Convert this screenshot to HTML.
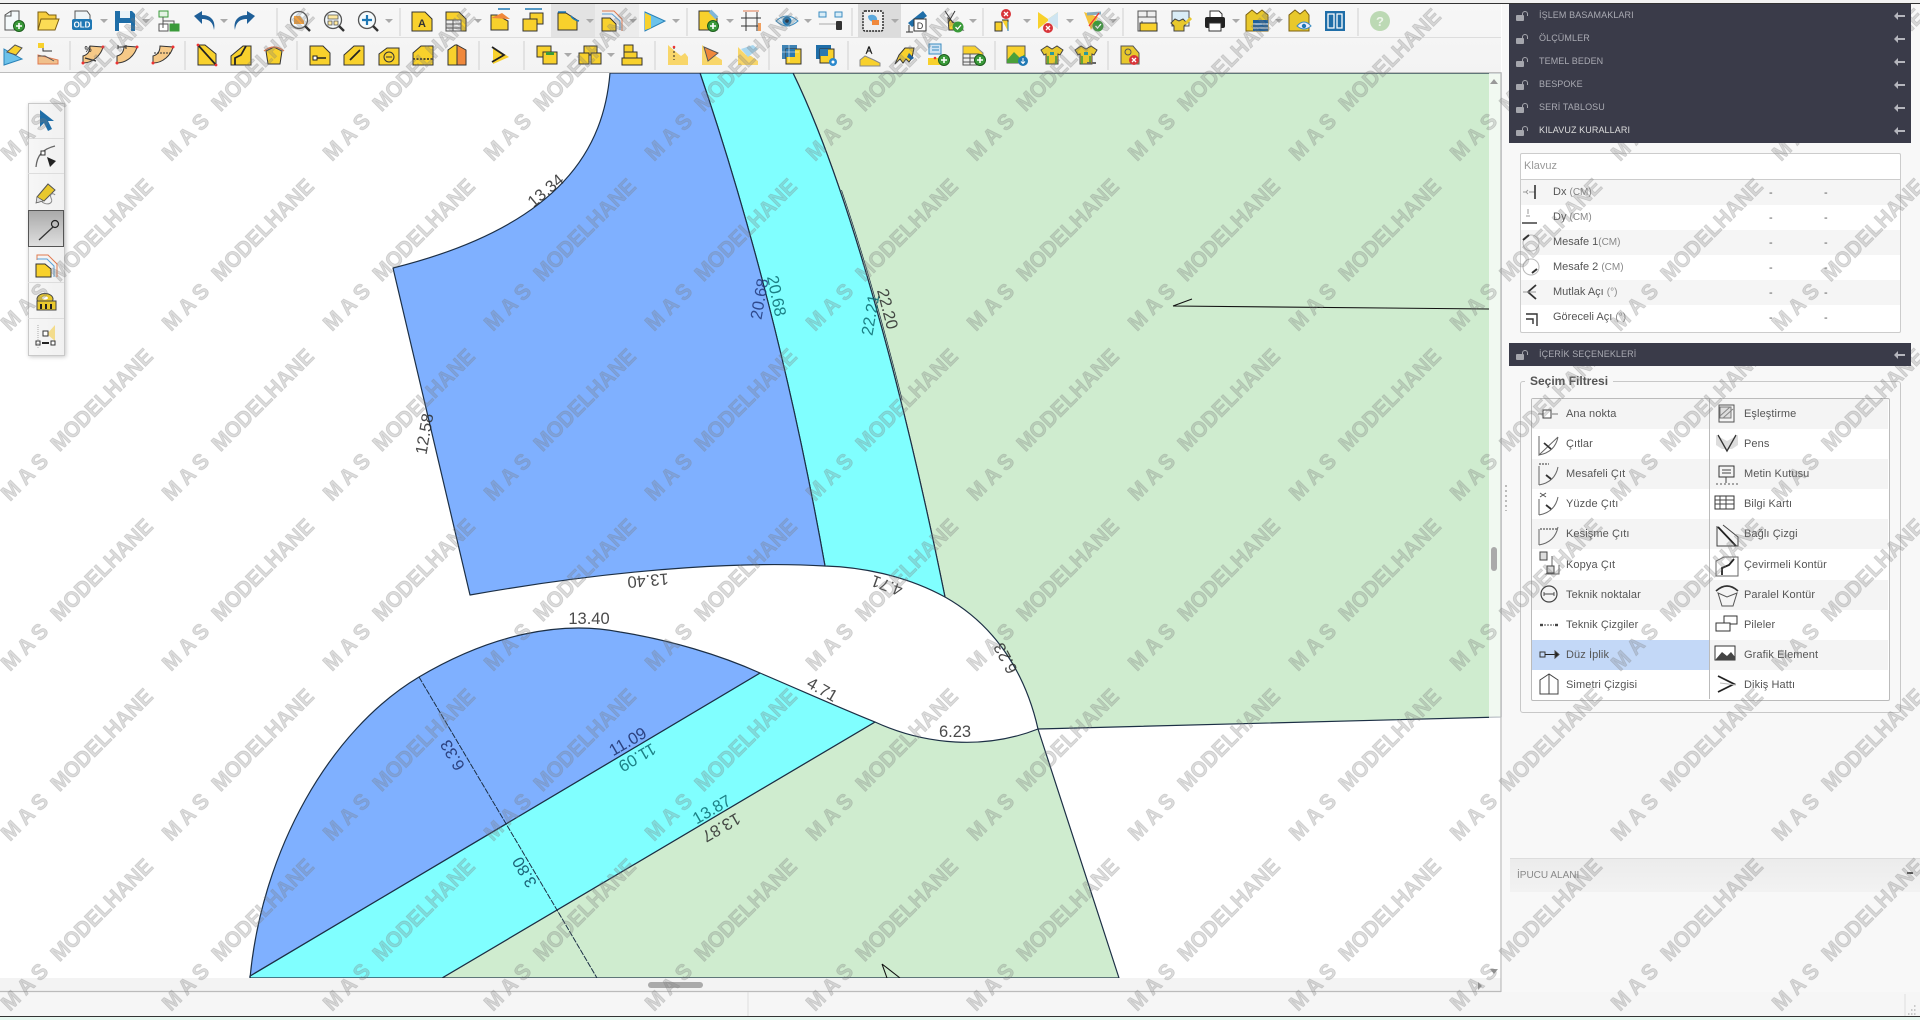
<!DOCTYPE html>
<html lang="tr"><head><meta charset="utf-8"><title>MAS Modelhane</title>
<style>
html,body{margin:0;padding:0;width:1920px;height:1020px;overflow:hidden;background:#fff;font-family:"Liberation Sans",sans-serif}
.a{position:absolute}
#tb{left:0;top:4px;width:1501px;height:68px;background:linear-gradient(#f7f7f7,#f3f3f3)}
#panel{left:1502px;top:4px;width:418px;height:988px;background:#f8f8f8}
.h{position:absolute;z-index:5;left:1509px;width:402px;height:23px;background:#3a3b49;color:#a9aab2;font-size:9px;line-height:23px;text-indent:30px;letter-spacing:.1px}
.h b{position:absolute;left:7px;top:11px;width:8px;height:6px;background:#a5a6ad;border-radius:1px}
.h b:after{content:"";position:absolute;left:6px;top:-4px;width:6px;height:5px;border:1.5px solid #a5a6ad;border-bottom:0;border-radius:4px 4px 0 0;box-sizing:border-box}
.h i{position:absolute;right:6px;top:11px;width:8px;height:2px;background:#b5b6bd}
.h i:before{content:"";position:absolute;left:-3px;top:-3px;border:4px solid transparent;border-left:0;border-right:4px solid #b5b6bd}
.box{left:1520px;top:153px;width:379px;height:178px;border:1px solid #ccc;border-radius:2px;background:#fff;color:#555;font-size:11px}
.r{position:absolute;left:0;width:379px;height:25px;line-height:25px}
.r.g{background:#f5f5f5}
.r span{position:absolute;left:32px}.r em{font-style:normal;color:#888;font-size:10px}
.r u{position:absolute;text-decoration:none;top:1px}
.c{position:absolute;height:30px;line-height:30px;font-size:11px;color:#555;letter-spacing:.1px}
.bg{background:#f4f4f4}
</style></head><body>

<div class="a" style="left:0;top:0;width:1920px;height:3px;background:#f2f2f2"></div>
<div class="a" style="left:0;top:3px;width:1920px;height:1px;background:#333"></div>

<!-- canvas -->
<svg class="a" style="left:0;top:0" width="1920" height="1020" viewBox="0 0 1920 1020" font-family="Liberation Sans" font-size="16.5" text-anchor="middle" dominant-baseline="central">
<defs><clipPath id="dbl"><rect x="800" y="190" width="200" height="210"/></clipPath></defs>
<rect x="0" y="72" width="1501" height="906" fill="#fff"/>
<g stroke="#1c2f45" stroke-width="1.2" stroke-linejoin="round">
<path fill="#cfeccf" d="M793 73L1501 73L1501 717L1038 729C1027 680 1000 628 945 597C905 400 850 190 793 73Z"/>
<path fill="#80ffff" d="M700 73H793C850 190 905 400 945 597C905 575 860 567 825 566C790 370 745 205 700 73Z"/>
<path fill="#7fb0ff" d="M610 73H700C745 205 790 370 825 566C760 562 640 565 470 595L393 268C565 225 604 145 610 73Z"/>
<path fill="#cfeccf" d="M875 722C925 745 985 750 1038 729L1119 978H442Z"/>
<path fill="#80ffff" d="M760 673C800 690 840 708 875 722L442 978H250L250 976Z"/>
<path fill="#7fb0ff" d="M250 978C262 850 330 730 419 677C490 635 560 620 620 632C670 640 720 655 760 673L250 976Z"/>
</g>
<g fill="none" stroke="#1c2f45">
<path d="M793 73C850 190 905 400 945 597" stroke-width=".7" transform="translate(1.6,0)" clip-path="url(#dbl)"/>
<path d="M419 677L505 822L557 910L597 978" stroke-width="1" stroke-dasharray="6 1.2"/>
<path d="M1173 306L1489 309M1173 306L1192 299M882 964L900 978M882 964L887 978" stroke="#111" stroke-width="1.1"/>
</g>
<g fill="#2a2a2a" fill-opacity=".85">
<text transform="translate(546,191) rotate(-40)">13.34</text>
<text transform="translate(425,434) rotate(-80)">12.58</text>
<text transform="translate(760,299) rotate(-80)" fill="#223a7a">20.68</text>
<text transform="translate(776,296) rotate(78)" fill="#0b6a70">20.68</text>
<text transform="translate(871,315) rotate(-80)" fill="#0b6a70">22.21</text>
<text transform="translate(887,309) rotate(75)">22.20</text>
<text transform="translate(648,580) rotate(175)">13.40</text>
<text transform="translate(887,585) rotate(200)">4.71</text>
<text transform="translate(1006,658) rotate(242)">6.23</text>
<text transform="translate(589,619)">13.40</text>
<text transform="translate(822,690) rotate(30)">4.71</text>
<text transform="translate(955,732)">6.23</text>
<text transform="translate(628,742) rotate(-30)" fill="#1d2f6a">11.09</text>
<text transform="translate(637,757) rotate(150)" fill="#0b6a70">11.09</text>
<text transform="translate(712,810) rotate(-30)" fill="#0b6a70">13.87</text>
<text transform="translate(721,827) rotate(150)">13.87</text>
<text transform="translate(453,755) rotate(240)" fill="#1d2f6a">6.33</text>
<text transform="translate(525,872) rotate(240)" fill="#0b4a60">3.80</text>
</g>
<rect x="1489" y="73" width="12" height="905" fill="#fff" opacity=".7"/>
<rect x="1491" y="547" width="6" height="24" rx="3" fill="#aaa"/>
<path d="M1490 84h8l-4-5z" fill="#999"/>
<rect x="0" y="978" width="1501" height="13" fill="#f3f3f3"/>
<rect x="648" y="982" width="55" height="6" rx="3" fill="#aaa"/>
<path d="M1490 969h8l-4 5zM1478 982v8l4-4z" fill="#999"/>
<rect x="0" y="992" width="1920" height="24" fill="#f6f6f6"/>
<path d="M0 991.5H1501M1501 72V992" stroke="#bbb" stroke-width="1.2"/>
<path d="M748 992V1016M1905 994V1016" stroke="#ddd"/>
<rect x="0" y="1016" width="1920" height="1" fill="#333"/>
<rect x="0" y="1017" width="1920" height="3" fill="#e6f7ef"/>
</svg>

<!-- toolbar -->
<div class="a" id="tb"></div>
<svg class="a" style="left:0;top:0" width="1501" height="74" viewBox="0 0 1501 74">
<defs>
<path id="d" d="M-4-2H4L0 2Z" fill="#aaa"/>
<path id="y" d="M-10-9H3L10-2V10H-10Z" fill="#f8d12c" stroke="#333"/>
<path id="y2" d="M-10-8H-2L9-1V9H-10Z" fill="#f8d12c" stroke="#333"/>
<g id="pl"><circle r="5.5" fill="#3a9a3a" stroke="#1c5c1c"/><path d="M-3 0H3M0-3V3" stroke="#fff" stroke-width="1.6"/></g>
<g id="x"><circle r="5" fill="#d8353a"/><path d="M-2-2L2 2M2-2L-2 2" stroke="#fff" stroke-width="1.3"/></g>
<g id="ok"><circle r="5.5" fill="#3a9a3a"/><path d="M-2.5 0L-.5 2L3-2" stroke="#fff" fill="none" stroke-width="1.3"/></g>
<g id="mg"><circle cx="-1" cy="-1" r="8.5" fill="#f5fbfd" stroke="#555" stroke-width="1.3"/><path d="M5 5L10 10" stroke="#333" stroke-width="2.4"/></g>
<g id="cv"><path d="M-10 8C0 8 8 0 10-8L-3-9C-3-3-6 0-10 1Z" fill="#f6c987" stroke="#333"/><circle cx="-10" cy="8" r="1.5" fill="#e33"/><circle cx="10" cy="-8" r="1.5" fill="#e33"/></g>
<g id="shirt"><path d="M-5-9L-11-5L-8 0L-6-1V9H6V-1L8 0L11-5L5-9L0-6Z" fill="#e8c82c" stroke="#444"/><rect x="-2" y="-3" width="4" height="3" fill="#2a9a9a"/><path d="M-4 1V9M4 1V9" stroke="#3a9a3a" stroke-width="1.5"/></g>
</defs>
<!-- highlights -->
<rect x="551" y="4" width="44" height="33" fill="#e3e3e3"/>
<rect x="595" y="4" width="44" height="33" fill="#ececec"/>
<rect x="858" y="4" width="43" height="33" fill="#dcdcdc"/>
<path d="M0 37.5H1501" stroke="#ddd"/>
<path d="M0 72.5H1501" stroke="#bdbdbd"/>
<g stroke="#d0d0d0">
<path d="M277 8V36M400 8V36M687 8V36M852 8V36M983 8V36M1123 8V36M1358 8V36"/>
<path d="M70 41V70M185 41V70M297 41V70M479 41V70M524 41V70M655 41V70M769 41V70M848 41V70M995 41V70M1108 41V70"/>
</g>
<!-- drops -->
<g>
<use href="#d" x="104" y="21"/><use href="#d" x="146" y="21"/><use href="#d" x="224" y="21"/><use href="#d" x="389" y="21"/><use href="#d" x="478" y="21"/><use href="#d" x="590" y="21"/><use href="#d" x="633" y="21"/><use href="#d" x="676" y="21"/><use href="#d" x="730" y="21"/><use href="#d" x="808" y="21"/><use href="#d" x="895" y="21"/><use href="#d" x="973" y="21"/><use href="#d" x="1027" y="21"/><use href="#d" x="1070" y="21"/><use href="#d" x="1113" y="21"/><use href="#d" x="1236" y="21"/><use href="#d" x="1279" y="21"/><use href="#d" x="568" y="55"/><use href="#d" x="611" y="55"/>
</g>
<!-- row 1 -->
<g transform="translate(14,21)"><path d="M-9 9V-6L-3-10H5V9Z" fill="#f4f9fb" stroke="#555"/><path d="M-9-5H-3V-10" fill="none" stroke="#555"/><use href="#pl" x="5" y="5"/></g>
<g transform="translate(48,21)"><path d="M-10 9V-9H-2L1-6H8V-2" fill="#f6cd3e" stroke="#7a5d12"/><path d="M-10 9L-7-2H11L7 9Z" fill="#fbdc55" stroke="#7a5d12"/></g>
<g transform="translate(82,21)"><path d="M-7-2V-10H5L8-6V-2" fill="#eef5f8" stroke="#555"/><rect x="-10" y="-2" width="20" height="11" rx="2" fill="#1f78b4"/><text x="0" y="6.5" font-size="8" font-weight="bold" text-anchor="middle" fill="#fff">OLD</text></g>
<g transform="translate(125,21)"><path d="M-10-10H7L10-7V10H-10Z" fill="#1f6ea8"/><rect x="-5" y="-10" width="10" height="7" fill="#e8f2f8"/><rect x="-6" y="2" width="12" height="8" fill="#fff"/></g>
<g transform="translate(168,21)" stroke="#555" fill="none"><rect x="-9" y="-10" width="9" height="6" stroke="#3a9a3a" fill="#e4f3e4"/><rect x="-9" y="3" width="9" height="7" fill="#fff"/><rect x="2" y="3" width="9" height="7" fill="#3a9a3a" stroke="#3a9a3a"/><path d="M-5-4V7M-5 0H6V3"/></g>
<path transform="translate(204,21)" d="M10 9C9 1 5-2-2-2V3L-10-5L-2-10V-6C7-6 12 0 10 9Z" fill="#1f5f98"/>
<path transform="translate(245,21)" d="M-10 9C-9 1-5-2 2-2V3L10-5L2-10V-6C-7-6-12 0-10 9Z" fill="#1f5f98"/>
<g transform="translate(300,21)"><use href="#mg"/><path d="M-6-5H0L4 0V3H-6Z" fill="#f0a040"/></g>
<g transform="translate(334,21)"><use href="#mg"/><path d="M-6-6H4V-2H-6ZM-6 0H-2V4H-6ZM0 0H4V4H0Z" fill="#ffe9a0" stroke="#555" stroke-width=".8"/></g>
<g transform="translate(368,21)"><use href="#mg"/><path d="M-6-1H4M-1-6V4" stroke="#1f78b4" stroke-width="2.2"/></g>
<g transform="translate(422,21)"><use href="#y"/><text x="0" y="6" font-size="11" font-weight="bold" text-anchor="middle" fill="#333">A</text></g>
<g transform="translate(456,21)"><use href="#y"/><rect x="-10" y="-1" width="15" height="11" fill="#eee" stroke="#555"/><path d="M-10 3H5M-10 7H5M-3-1V10" stroke="#555"/></g>
<g transform="translate(500,21)"><path d="M-3-6L8 0V9H-9V-6Z" fill="#f8d12c" stroke="#333"/><path d="M-9-3L2-8L10-2" fill="#f0883c"/><path d="M-2-12H10" stroke="#1f78b4" stroke-width="1.5"/></g>
<g transform="translate(533,21)"><rect x="-3" y="-8" width="13" height="11" fill="#f8d12c" stroke="#333"/><rect x="-10" y="-2" width="14" height="12" fill="#f8d12c" stroke="#333"/><path d="M-8-12H9" stroke="#1f78b4" stroke-width="1.5"/></g>
<g transform="translate(568,21)"><use href="#y2"/><path d="M-10-9H-2M3-5C5-2 7-1 11 0" stroke="#1f78b4" stroke-width="1.6" fill="none"/></g>
<g transform="translate(612,21)"><path d="M-10-10H2L10-2V10" fill="none" stroke="#e07a50"/><path d="M-10-7H0L8 0V9" fill="none" stroke="#5aa0d8"/><path d="M-10-3H-2L4 3V10H-10Z" fill="#f8d12c" stroke="#333"/></g>
<g transform="translate(655,21)"><path d="M-10-9L10 0L-10 10Z" fill="#6cc2ea" stroke="#2a82b8"/><path d="M-10-8V9L-4 7V-5Z" fill="#f8d12c"/></g>
<g transform="translate(708,21)"><path d="M-9-10H2L9-3V9H-9Z" fill="#f8d12c" stroke="#333"/><path d="M2-10L9-3" stroke="#7fb6d8" stroke-width="4"/><use href="#pl" x="5" y="5"/></g>
<g transform="translate(752,21)" stroke="#333" fill="none"><path d="M-6-9V10M5-9V10M-11-3H9M-11 5H9"/><path d="M-9-10H7" stroke="#e07a50"/><rect x="6" y="2" width="3" height="8" fill="#f0a060" stroke="none"/></g>
<g transform="translate(787,21)"><path d="M-11 0Q0-10 11 0Q0 10-11 0Z" fill="#d9edf7" stroke="#3b8cc0"/><circle r="4.5" fill="#1f78b4"/><circle r="1.8" fill="#123"/></g>
<g transform="translate(830,21)"><rect x="-11" y="-9" width="7" height="5" fill="#d9edf7" stroke="#3b8cc0"/><rect x="5" y="-9" width="7" height="5" fill="#d9edf7" stroke="#3b8cc0"/><path d="M-11 3H8" stroke="#aaa"/><rect x="6" y="0" width="6" height="9" rx="1" fill="#333"/></g>
<g transform="translate(873,21)"><rect x="-10" y="-10" width="20" height="20" rx="2" fill="#eee" stroke="#222" stroke-dasharray="2 1" stroke-width="1.4"/><path d="M-5-5C0-8 5-5 4 0C0 2-5 0-5-5Z" fill="#5aa8dc"/><rect x="-1" y="-1" width="7" height="5" fill="#f0883c"/></g>
<g transform="translate(917,21)"><path d="M-9 2L6-10L10-5L-5 6Z" fill="#1f6ea8"/><rect x="-3" y="-2" width="12" height="12" fill="#fff" stroke="#333"/><text x="3" y="8" font-size="9" text-anchor="middle" fill="#333">D</text><path d="M-8 4V11M-11 11H-4" stroke="#333"/></g>
<g transform="translate(953,21)"><path d="M-5-3L10 9H-4Z" fill="#f8d12c" stroke="#333"/><path d="M-8-10L0 2M2-10L-5 2" stroke="#333" fill="none"/><use href="#ok" x="5" y="6"/></g>
<g transform="translate(1005,21)"><path d="M-10 1H-3V10H-10ZM-3-1H3V10" fill="#f8d12c" stroke="#333"/><path d="M3 10V1" stroke="#1f78b4"/><use href="#x" x="1" y="-7"/></g>
<g transform="translate(1048,21)"><path d="M-10-9L0-2L10-9V8L0 0L-10 8Z" fill="#f8d12c"/><path d="M0-2L10-9V8L0 0Z" fill="#cfe5f1"/><use href="#x" x="0" y="7"/></g>
<g transform="translate(1093,21)"><path d="M-9-9L5-4L-2 9Z" fill="#f3c33c"/><path d="M-6-7L8-8" stroke="#8ab" stroke-width="3"/><path d="M-4 5L6-8" stroke="#e33" stroke-width="1.3"/><use href="#ok" x="5" y="5"/></g>
<g transform="translate(1147,21)"><rect x="-9" y="-10" width="18" height="20" fill="#eee" stroke="#555"/><path d="M-9-4H9M0-10V-4M-5 0V10" stroke="#555"/><rect x="-7" y="2" width="17" height="8" fill="#f8d12c" stroke="#333"/></g>
<g transform="translate(1181,21)"><rect x="-9" y="-10" width="17" height="15" fill="#d9edf7" stroke="#555"/><path d="M-10 2L-6-2L-2 0L2-2L6 2L3 5V10H-7V5Z" fill="#e8c82c" stroke="#444"/><path d="M4 3L10-3" stroke="#e8c82c" stroke-width="3"/></g>
<g transform="translate(1215,21)"><path d="M-5-4V-10H4L7-7V-4" fill="#fff" stroke="#333"/><rect x="-10" y="-4" width="20" height="11" rx="2" fill="#222"/><rect x="-6" y="2" width="12" height="8" fill="#fff" stroke="#333"/></g>
<g transform="translate(1257,21)"><path d="M-5-11L-11-6V10H11V-6L5-11L0-7Z" fill="#e8c82c" stroke="#7a6012"/><rect x="-4" y="-1" width="15" height="11" fill="#1f5f98"/><path d="M-4 3H11M-4 7H11" stroke="#fff"/></g>
<g transform="translate(1300,21)"><path d="M-5-11L-11-6V10H9V-6L5-11L0-7Z" fill="#e8c82c" stroke="#7a6012"/><path d="M-3 5Q4-3 11 5Q4 11-3 5Z" fill="#eef" stroke="#3b8cc0"/><circle cx="4" cy="5" r="2.2" fill="#1f78b4"/></g>
<g transform="translate(1335,21)"><rect x="-10" y="-10" width="20" height="20" fill="#1f6ea8"/><path d="M-7-7H-1V7H-7ZM2-7H7V7H2Z" fill="none" stroke="#fff" stroke-width="1.3"/></g>
<g transform="translate(1380,21)"><circle r="10" fill="#bcd9b4"/><text y="5" font-size="13" font-weight="bold" text-anchor="middle" fill="#edf5ea">?</text></g>
<!-- row 2 -->
<g transform="translate(14,55)"><path d="M-10-6L8 4L-10 10Z" fill="#6cc2ea" stroke="#2a82b8"/><path d="M-7-3L1-10L8-7L2 0Z" fill="#f8d12c" stroke="#555"/></g>
<g transform="translate(48,55)"><path d="M-10 9H10V5L-10 0Z" fill="#f0c08c" stroke="#e07a50"/><path d="M-10 1H-3L6 6" stroke="#555" fill="none"/><path d="M-5-9V-4H4" stroke="#333" fill="none"/><rect x="-10" y="-12" width="6" height="5" fill="#f8d12c"/></g>
<g transform="translate(93,55)"><use href="#cv"/><path d="M-8 3L3 6" stroke="#333" stroke-width="1.3"/><text x="-5" y="-3" font-size="8" font-weight="bold" text-anchor="middle" fill="#333">%</text></g>
<g transform="translate(127,55)"><use href="#cv"/><path d="M-9-8H-1M-9-10V-6M-1-10V-6" stroke="#333"/></g>
<g transform="translate(163,55)"><use href="#cv"/><path d="M-9-2H8" stroke="#333" stroke-dasharray="2 1"/></g>
<g transform="translate(207,55)"><path d="M-9-10L-2-10L9-1V10H-9Z" fill="#f8d12c" stroke="#333"/><path d="M-9-10L9 10" stroke="#222" stroke-width="1.7"/><circle cx="-9" cy="-10" r="1.4" fill="#e33"/><circle cx="9" cy="10" r="1.4" fill="#e33"/></g>
<g transform="translate(241,55)"><path d="M-10 10V1L2-9H10V10Z" fill="#f8d12c" stroke="#333"/><path d="M-6 10V3L0 0L5-9" stroke="#222" stroke-width="1.8" fill="none"/></g>
<g transform="translate(274,55)"><path d="M-8-4L0-8L8-4L6 9H-6Z" fill="#f8d12c" stroke="#333"/><path d="M-10-4Q0-12 10-4" stroke="#e07a50" stroke-width="1.3" fill="none"/></g>
<g transform="translate(320,55)"><use href="#y"/><rect x="-7" y="1" width="4" height="4" fill="#fff" stroke="#222"/><path d="M-3 3H6" stroke="#222" stroke-width="1.5"/></g>
<g transform="translate(354,55)"><path d="M-10 10V0L0-9H10V10Z" fill="#f8d12c" stroke="#333"/><path d="M-4 5L6-5" stroke="#222" stroke-width="1.8"/></g>
<g transform="translate(389,55)"><path d="M-10 10V-1L-2-7H10V10Z" fill="#f8d12c" stroke="#333"/><circle cy="2" r="5" fill="none" stroke="#333"/><path d="M-3 2H3" stroke="#333"/></g>
<g transform="translate(423,55)"><path d="M-10 10V-2L-2-9H10V10Z" fill="#f8d12c" stroke="#333"/><path d="M-10 4H10" stroke="#222" stroke-dasharray="2 1.5" stroke-width="1.5"/></g>
<g transform="translate(457,55)"><path d="M-2-10L-9-5V10H0V-10Z" fill="#f8d12c" stroke="#333"/><path d="M0-10L9-5V10H0Z" fill="#f0883c" stroke="#333"/></g>
<g transform="translate(501,55)"><path d="M-8-8L8 2L-8 9Z" fill="#f8d12c"/><path d="M-9-8L3 0L-9 7" stroke="#222" fill="none" stroke-width="1.8"/></g>
<g transform="translate(547,55)"><rect x="-10" y="-9" width="14" height="11" fill="#f8d12c" stroke="#333"/><rect x="-4" y="-3" width="14" height="12" fill="#f8d12c" stroke="#333"/><rect x="-1" y="-3" width="8" height="3" fill="#3a9a3a"/></g>
<g transform="translate(590,55)"><rect x="-6" y="-9" width="13" height="9" fill="#f8d12c" stroke="#333"/><rect x="-11" y="-2" width="10" height="11" fill="#f8d12c" stroke="#333"/><rect x="1" y="-2" width="10" height="11" fill="#f8d12c" stroke="#333"/></g>
<g transform="translate(632,55)"><rect x="-8" y="-10" width="9" height="7" fill="#f8d12c" stroke="#333"/><rect x="-8" y="-3" width="13" height="6" fill="#f8d12c" stroke="#333"/><rect x="-10" y="3" width="20" height="7" fill="#f8d12c" stroke="#333"/></g>
<g transform="translate(678,55)"><path d="M-10 10V-10L-2-3L3 1L7-2L10 2V10Z" fill="#f8d66a"/><path d="M-4-8V5" stroke="#222" stroke-dasharray="2 2"/><circle cx="-4" cy="-8" r="1.3" fill="#e33"/></g>
<g transform="translate(712,55)"><path d="M-10 10V-10L2 0L10 5V10Z" fill="#f8d66a"/><path d="M-8-8L6-2L-4 6Z" fill="#f0883c" stroke="#555"/></g>
<g transform="translate(748,55)"><path d="M-10 10V-8L-2 0L3 1L10 6V10Z" fill="#f8d66a"/><path d="M-7-6L5-10L10-6L0 2Z" fill="#aad8f0"/></g>
<g transform="translate(792,55)"><rect x="-10" y="-10" width="15" height="14" fill="#1f6ea8" opacity=".85"/><rect x="-6" y="-6" width="15" height="15" fill="#f8d12c" stroke="#333"/><rect x="-6" y="-6" width="9" height="8" fill="#2a78b0"/><path d="M-10-3H7M-3-10V7" stroke="#fff" stroke-width=".6"/></g>
<g transform="translate(826,55)"><rect x="-10" y="-10" width="15" height="14" fill="#1f6ea8"/><rect x="-6" y="-6" width="14" height="14" fill="#f8d12c" stroke="#333"/><rect x="-6" y="-6" width="8" height="7" fill="#2a78b0"/><circle cx="7" cy="7" r="4" fill="#2a88cc"/><circle cx="7" cy="7" r="1.5" fill="#fff"/></g>
<g transform="translate(870,55)"><path d="M-10 5L-5 1L4 5L10 8V11H-10Z" fill="#f8d12c" stroke="#888"/><path d="M-4-1L-1-8L2-1" stroke="#222" fill="none"/><text x="-1" y="-2" font-size="9" font-weight="bold" text-anchor="middle" fill="#222">A</text></g>
<g transform="translate(905,55)"><path d="M-10 9L-6 0L0-7H9L7 3L4 7L1 4L-2 8L-5 4Z" fill="#f8d12c" stroke="#333"/><path d="M4-2L9 3L6 5L2 2Z" fill="#1f5f98"/></g>
<g transform="translate(938,55)"><rect x="-9" y="-11" width="12" height="10" fill="#cfe3f3" stroke="#3b8cc0"/><path d="M-6-8H1M-6-5H1" stroke="#3b8cc0"/><path d="M-10 10V3H0L4 7V10Z" fill="#f8d12c"/><circle cx="-3" cy="3" r="1.3" fill="#e33"/><use href="#pl" x="6" y="5"/></g>
<g transform="translate(973,55)"><path d="M-10-9H2L10-2V5H-10Z" fill="#f8d12c" stroke="#888"/><rect x="-10" y="-1" width="16" height="11" fill="#eee" stroke="#555"/><path d="M-10 3H6M-10 7H6M-3-1V10" stroke="#555"/><use href="#pl" x="7" y="5"/></g>
<g transform="translate(1017,55)"><rect x="-10" y="-9" width="18" height="17" fill="#f8d12c" stroke="#555"/><path d="M-10 5L-3-3L3 3L8-1V8H-10Z" fill="#4aa03a"/><circle cx="6" cy="6" r="5" fill="#1f78b4"/><path d="M6 3V8M4 6.5L6 8.5L8 6.5" stroke="#fff" fill="none"/></g>
<use href="#shirt" x="1052" y="55"/>
<g transform="translate(1086,55)"><use href="#shirt"/><path d="M1 8h4M6 8h4" stroke="#666" stroke-width="2"/></g>
<g transform="translate(1130,55)"><path d="M-9-9H3L9-2V9H-9Z" fill="#e8c82c" stroke="#555"/><circle cx="-2" cy="-3" r="3" fill="none" stroke="#555"/><use href="#x" x="4" y="5"/></g>
</svg>

<!-- tool palette -->
<div class="a" style="left:28px;top:103px;width:35px;height:251px;background:linear-gradient(90deg,#f6f6f6,#f1f1f1);border:1px solid #c9c9c9;box-shadow:1px 1px 4px rgba(0,0,0,.22)"></div>
<svg class="a" style="left:28px;top:103px" width="36" height="253" viewBox="0 0 36 253">
<path d="M0 35.5H36M0 70.5H36M0 143.5H36M0 179.5H36M0 215.5H36" stroke="#ddd"/>
<defs><linearGradient id="ag" x1="0" y1="0" x2="0" y2="1"><stop offset="0" stop-color="#a9a9a9"/><stop offset="1" stop-color="#e0e0e0"/></linearGradient></defs>
<rect x=".5" y="107.5" width="35" height="36" fill="url(#ag)" stroke="#555"/>
<path d="M12 7V24L16 20L20 28L24 26L20 18L26 18Z" fill="#1f6ea8"/>
<path d="M8 64C9 52 15 46 27 43" fill="none" stroke="#666" stroke-width="1.3"/><rect x="13" y="48" width="4" height="4" fill="#fff" stroke="#333"/><path d="M19 54L28 58L22 64Z" fill="#222"/>
<path d="M9 94L20 81L27 87L16 98Z" fill="#e8c82c" stroke="#555"/><path d="M14 99C20 103 26 100 23 95C21 90 26 90 27 92" fill="none" stroke="#888"/><path d="M9 94L8 100L15 98" fill="#ddd" stroke="#555" stroke-width=".7"/>
<circle cx="27" cy="121" r="3.5" fill="none" stroke="#222" stroke-width="1.2"/><path d="M25 124L11 137" stroke="#333" stroke-width="1.3"/>
<path d="M9 157V152H20L29 161V174" fill="none" stroke="#e07a50"/><path d="M9 156H19L26 163V174" fill="none" stroke="#5aa0d8"/><path d="M8 161H17L23 166V174H8Z" fill="#f8d12c" stroke="#333"/>
<ellipse cx="17" cy="196" rx="8" ry="5.5" fill="#e8c82c" stroke="#444"/><ellipse cx="17" cy="195" rx="3" ry="1.6" fill="#fff"/><path d="M9 198V207H28V198H18Z" fill="#e8c82c" stroke="#444"/><path d="M13 201V206M18 201V206M23 201V206" stroke="#222" stroke-width="2"/>
<path d="M19 231L27 222V238Z" fill="#f3dc8c"/><rect x="15" y="228" width="5" height="5" fill="#fff" stroke="#333"/><rect x="8" y="238" width="4" height="4" fill="#fff" stroke="#333"/><rect x="23" y="238" width="4" height="4" fill="#fff" stroke="#333"/><path d="M14 240H21" stroke="#222" stroke-width="2"/><path d="M10 222V246" stroke="#aaa" stroke-dasharray="1 1"/>
</svg>

<!-- right panel -->
<div class="a" id="panel"></div>
<svg class="a" style="left:1503px;top:484px" width="6" height="28"><path d="M3 1V27" stroke="#bbb" stroke-width="2" stroke-dasharray="2 3"/></svg>
<div class="h" style="top:4px"><b></b>İŞLEM BASAMAKLARI<i></i></div>
<div class="h" style="top:27px"><b></b>ÖLÇÜMLER<i></i></div>
<div class="h" style="top:50px"><b></b>TEMEL BEDEN<i></i></div>
<div class="h" style="top:73px"><b></b>BESPOKE<i></i></div>
<div class="h" style="top:96px"><b></b>SERİ TABLOSU<i></i></div>
<div class="h" style="top:119px;height:24px;color:#ddd"><b></b>KILAVUZ KURALLARI<i></i></div>

<div class="a box">
<div class="a" style="left:3px;top:0;height:25px;line-height:25px;color:#999">Klavuz</div>
<div class="a" style="left:0;top:25px;width:379px;height:1px;background:#ccc"></div>
<div class="r g" style="top:26px"><span>Dx <em>(CM)</em></span><u style="left:248px">-</u><u style="left:303px">-</u></div>
<div class="r" style="top:51px"><span>Dy <em>(CM)</em></span><u style="left:248px">-</u><u style="left:303px">-</u></div>
<div class="r g" style="top:76px"><span>Mesafe 1<em>(CM)</em></span><u style="left:248px">-</u><u style="left:303px">-</u></div>
<div class="r" style="top:101px"><span>Mesafe 2 <em>(CM)</em></span><u style="left:248px">-</u><u style="left:303px">-</u></div>
<div class="r g" style="top:126px"><span>Mutlak Açı <em>(°)</em></span><u style="left:248px">-</u><u style="left:303px">-</u></div>
<div class="r" style="top:151px"><span>Göreceli Açı <em>(°)</em></span><u style="left:248px">-</u><u style="left:303px">-</u></div>
</div>
<svg class="a" style="left:1520px;top:179px" width="30" height="152" viewBox="0 0 30 152" fill="none" stroke="#333">
<path d="M3 13H6M9 13H15M8 11L6 13L8 15" stroke="#999"/><path d="M15 6V20" stroke-width="1.6"/>
<path d="M8 30V35M6 37H10" stroke="#999"/><path d="M2 44H17" stroke-width="1.4"/>
<circle cx="11" cy="64" r="8" stroke="#bbb"/><path d="M3 61L9 56" stroke-width="2"/>
<circle cx="11" cy="88" r="8" stroke="#bbb"/><path d="M12 94L17 90" stroke-width="2"/>
<path d="M16 106L8 113L16 120" stroke-width="1.8"/><path d="M3 113H16" stroke="#999"/>
<path d="M6 135H17V147M6 140H13V145" stroke-width="1.4"/>
</svg>

<div class="h" style="top:343px"><b></b>İÇERİK SEÇENEKLERİ<i></i></div>

<div class="a" style="left:1520px;top:381px;width:379px;height:330px;border:1px solid #c8c8c8;border-radius:3px"></div>
<div class="a" style="left:1525px;top:374px;padding:0 5px;background:#f8f8f8;color:#555;font-size:12px;font-weight:bold;line-height:15px">Seçim Filtresi</div>
<div class="a" style="left:1531px;top:398px;width:357px;height:301px;border:1px solid #bbb;border-radius:2px;background:#fff"></div>
<div class="a bg" style="left:1532px;top:399px;width:356px;height:30px"></div>
<div class="a bg" style="left:1532px;top:459px;width:356px;height:30px"></div>
<div class="a bg" style="left:1532px;top:519px;width:356px;height:30px"></div>
<div class="a bg" style="left:1532px;top:580px;width:356px;height:30px"></div>
<div class="a" style="left:1532px;top:640px;width:177px;height:30px;background:#c3d8f7"></div>
<div class="a bg" style="left:1709px;top:640px;width:179px;height:30px"></div>
<div class="a" style="left:1709px;top:399px;width:1px;height:300px;background:#bbb"></div>

<div class="c" style="left:1566px;top:399px">Ana nokta</div><div class="c" style="left:1744px;top:399px">Eşleştirme</div>
<div class="c" style="left:1566px;top:429px">Çıtlar</div><div class="c" style="left:1744px;top:429px">Pens</div>
<div class="c" style="left:1566px;top:459px">Mesafeli Çıt</div><div class="c" style="left:1744px;top:459px">Metin Kutusu</div>
<div class="c" style="left:1566px;top:489px">Yüzde Çıtı</div><div class="c" style="left:1744px;top:489px">Bilgi Kartı</div>
<div class="c" style="left:1566px;top:519px">Kesişme Çıtı</div><div class="c" style="left:1744px;top:519px">Bağlı Çizgi</div>
<div class="c" style="left:1566px;top:550px">Kopya Çıt</div><div class="c" style="left:1744px;top:550px">Çevirmeli Kontür</div>
<div class="c" style="left:1566px;top:580px">Teknik noktalar</div><div class="c" style="left:1744px;top:580px">Paralel Kontür</div>
<div class="c" style="left:1566px;top:610px">Teknik Çizgiler</div><div class="c" style="left:1744px;top:610px">Pileler</div>
<div class="c" style="left:1566px;top:640px">Düz İplik</div><div class="c" style="left:1744px;top:640px">Grafik Element</div>
<div class="c" style="left:1566px;top:670px">Simetri Çizgisi</div><div class="c" style="left:1744px;top:670px">Dikiş Hattı</div>

<svg class="a" style="left:1532px;top:399px" width="356" height="300" viewBox="0 0 356 300" fill="none" stroke="#444">
<path d="M6 15H11M20 15H26" stroke="#777"/><rect x="11" y="11" width="8" height="8" fill="#fff"/>
<path d="M7 37V56L26 38M7 56C18 54 24 48 26 38" stroke="#666"/><path d="M12 44L19 50" stroke-width="1.8" stroke="#333"/>
<g transform="translate(0,30)"><path d="M7 37V56M7 56C18 54 24 48 26 38" stroke="#666"/><path d="M14 46L19 50" stroke-width="1.8" stroke="#333"/><path d="M7 35H17" stroke="#333" stroke-dasharray="2 1"/></g>
<g transform="translate(0,60)"><path d="M7 40V56M7 56C18 54 24 48 26 38" stroke="#666"/><path d="M14 46L19 50" stroke-width="1.8" stroke="#333"/><path d="M8 34L14 38M14 34L8 38" stroke="#555"/></g>
<g transform="translate(0,90)"><path d="M7 40V56M7 56C18 54 24 48 26 38" stroke="#666"/><path d="M8 40H26" stroke="#333" stroke-dasharray="2 1"/></g>
<rect x="8" y="153" width="7" height="8" fill="#ddd" stroke="#444"/><path d="M20 157V170L14 175H27V166" stroke="#666"/><rect x="15" y="167" width="7" height="7" fill="#ddd"/>
<circle cx="17" cy="195" r="8" stroke-width="1.2"/><path d="M12 195H22M12 193V197M22 193V197" stroke-width=".9"/>
<path d="M8 226H11" stroke-width="2.4"/><path d="M12 226H22" stroke-dasharray="2 1"/><path d="M23 226H26" stroke-width="2.4"/>
<rect x="8" y="253" width="5" height="5" stroke="#333"/><path d="M13 255.5H27" stroke="#222"/><path d="M23 252L27 255.5L23 259Z" fill="#222"/>
<path d="M17 275L8 281V295H26V281ZM17 275V295" stroke="#444"/>
<rect x="187" y="6" width="15" height="17" stroke="#555"/><rect x="188" y="8" width="11" height="11" fill="#ddd" stroke="#777"/><path d="M188 17L198 8M191 19L201 10" stroke="#888"/>
<path d="M184 36L195 42L206 36V46L200 50H190L184 46Z" fill="#ddd" stroke="none"/><path d="M186 36L195 52L204 36" stroke="#333" stroke-width="1.3"/>
<rect x="187" y="67" width="15" height="11" stroke="#333"/><path d="M190 71H199M190 74H199M194 78V84" stroke="#444"/><path d="M184 85H206" stroke="#555" stroke-dasharray="2 2"/>
<rect x="183" y="97" width="19" height="13" stroke="#333"/><path d="M183 101H202M183 105H202M188 97V110M194 97V110" stroke="#444"/>
<path d="M185 127V147H206V138L191 126" stroke="#444"/><path d="M186 128L204 147" stroke="#222" stroke-width="1.8"/>
<path d="M184 177V162L192 158H206V177Z" stroke="#666"/><path d="M190 176V169L197 166L202 160" stroke="#222" stroke-width="1.8"/>
<path d="M186 194L195 198L205 194L201 207H190Z" stroke="#555"/><path d="M184 192Q195 182 206 192" stroke="#333" stroke-width="1.6"/>
<rect x="192" y="217" width="13" height="8" fill="#fff" stroke="#333"/><rect x="184" y="224" width="14" height="8" fill="#fff" stroke="#333"/>
<rect x="183" y="247" width="20" height="14" stroke="#333" fill="#fff"/><path d="M184 260L190 253L195 257L199 253L203 258V261H184Z" fill="#444" stroke="none"/>
<path d="M186 277L202 285L186 293" stroke="#222" stroke-width="1.8"/><path d="M188 284L204 286" stroke="#bbb"/>
</svg>

<div class="a" style="left:1510px;top:858px;width:410px;height:34px;background:linear-gradient(#ececec,#f2f2f2);border-top:1px solid #ddd;box-sizing:border-box;color:#888;font-size:10px;line-height:33px;text-indent:7px">İPUCU ALANI</div>
<div class="a" style="left:1907px;top:872px;width:6px;height:2px;background:#555"></div>
<svg class="a" style="left:1905px;top:1005px" width="14" height="11"><path d="M3 9h9M6 5h6M9 1h3" stroke="#bbb" stroke-width="1.5" stroke-dasharray="1.5 1.5"/></svg>

<!-- watermark -->
<svg class="a" style="left:0;top:0;pointer-events:none" width="1920" height="1020">
<defs><pattern id="wm" patternUnits="userSpaceOnUse" x="161" y="172" width="161" height="170">
<g transform="translate(10,160) rotate(-45)" font-family="Liberation Sans" font-weight="bold" font-size="22" fill="#777" fill-opacity=".26" stroke="#777" stroke-opacity=".26" stroke-width=".8">
<text x="0" y="0" textLength="56" lengthAdjust="spacingAndGlyphs">M A S</text>
<text x="70" y="0" textLength="134" lengthAdjust="spacingAndGlyphs">MODELHANE</text>
</g>
</pattern></defs>
<rect width="1920" height="1020" fill="url(#wm)"/>
</svg>
</body></html>
